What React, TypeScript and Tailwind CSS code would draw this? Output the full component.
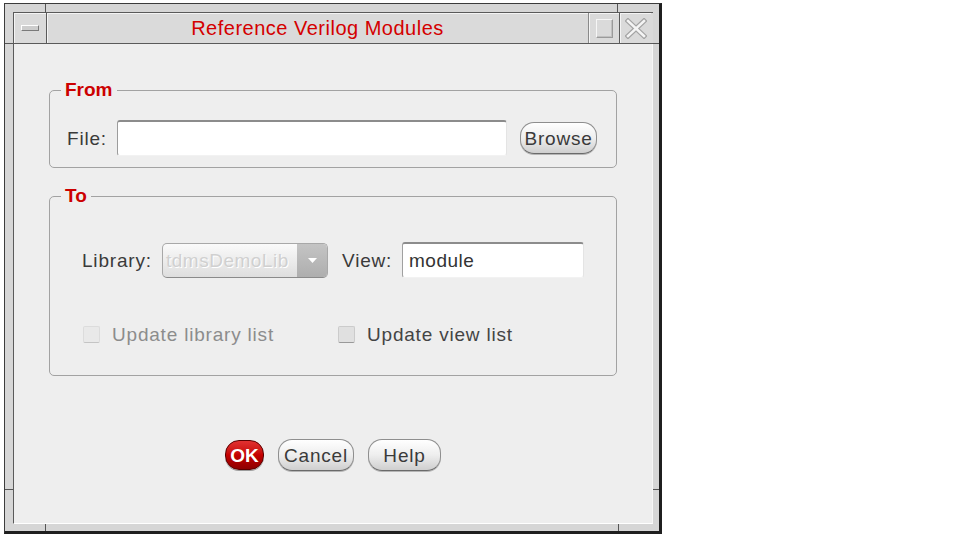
const ui = "font-['Liberation_Sans',Arial,sans-serif]";

function FrameMark({ className }: { className: string }) {
  return <div className={`absolute bg-[#555] ${className}`} />;
}

function PillButton({ label, width }: { label: string; width: string }) {
  return (
    <button
      className={`${width} h-[32px] rounded-[14px] border border-[#8e8e8e] border-b-[#6a6a6a] bg-gradient-to-b from-white via-[#eeeeee] to-[#cfcfcf] text-[19px] tracking-[0.8px] text-[#3a3a3a] leading-none shadow-[0_1px_0_#b5b5b5] flex items-center justify-center`}
    >
      {label}
    </button>
  );
}

function Checkbox({ disabled }: { disabled?: boolean }) {
  return (
    <span
      className={`w-[17px] h-[17px] rounded-[2px] border ${
        disabled
          ? 'bg-[#e9e9e9] border-[#dcdcdc] border-b-[#c4c4c4]'
          : 'bg-[#e0e0e0] border-[#cbcbcb] border-b-[#999]'
      }`}
    />
  );
}

export default function App() {
  return (
    <div className={`w-[958px] h-[538px] bg-white pt-[3px] pl-[4px] ${ui}`}>
      <div className="relative w-[658px] h-[531px] bg-[#d6d6d6] border-t border-l border-[#3c3c3c] border-r-[3px] border-b-[3px] border-r-[#1f1f1f] border-b-[#1f1f1f] pt-[8px] pl-[8px] pr-[6px] pb-[7px] flex flex-col">
        {/* resize handle marks on the frame */}
        <FrameMark className="left-[40px] top-0 w-px h-[9px]" />
        <FrameMark className="left-[612px] top-0 w-px h-[9px]" />
        <FrameMark className="left-0 top-[39px] w-[8px] h-px" />
        <FrameMark className="left-[648px] top-[39px] w-[6px] h-px" />
        <FrameMark className="left-0 top-[485px] w-[8px] h-px" />
        <FrameMark className="left-[648px] top-[485px] w-[6px] h-px" />
        <FrameMark className="left-[40px] top-[520px] w-px h-[7px]" />
        <FrameMark className="left-[613px] top-[520px] w-px h-[7px]" />

        {/* title bar */}
        <div className="h-[32px] flex border-t border-l border-b border-[#5a5a5a] bg-[#dadada]">
          <div className="w-[33px] border-r border-[#5a5a5a] shadow-[inset_1px_1px_0_#f4f4f4] flex items-center justify-center">
            <span className="w-[18px] h-[6px] bg-[#cdcdcd] border border-t-white border-l-white border-[#7a7a7a]" />
          </div>
          <div className="flex-1 shadow-[inset_1px_1px_0_#f4f4f4] flex items-center justify-center text-[20px] tracking-[0.5px] text-[#d40000] leading-none">
            Reference Verilog Modules
          </div>
          <div className="w-[31px] border-l border-[#8a8a8a] shadow-[inset_1px_1px_0_#f4f4f4] flex items-center justify-center">
            <span className="w-[17px] h-[19px] border border-[#9a9a9a] border-t-[#f6f6f6] border-l-[#f6f6f6] shadow-[inset_-1px_-1px_0_#c0c0c0]" />
          </div>
          <div className="w-[32px] border-l border-[#5a5a5a] shadow-[inset_1px_1px_0_#f4f4f4] flex items-center justify-center">
            <svg width="22" height="21" viewBox="0 0 22 21">
              <path d="M3 3 L19 18 M19 3 L3 18" stroke="#a3a3a3" strokeWidth="5" strokeLinecap="square" />
              <path d="M3 3 L19 18 M19 3 L3 18" stroke="#f4f4f4" strokeWidth="2.5" strokeLinecap="square" />
            </svg>
          </div>
          <div className="w-[2px]" />
        </div>

        {/* dialog body */}
        <div className="flex-1 bg-[#eeeeee] border-l border-l-[#5a5a5a] border-r border-r-[#f7f7f7] border-b border-b-white px-[35px] pt-[35px] flex flex-col text-[19px] tracking-[0.8px] text-[#3a3a3a]">
          <fieldset className="border border-[#a2a2a2] rounded-[5px]">
            <legend className="ml-[11px] px-[4px] text-[19px] leading-[22px] font-bold tracking-normal text-[#cc0000]">
              From
            </legend>
            <div className="pt-[19px] pb-[11px] pl-[17px] flex items-center">
              <span className="w-[50px] leading-none">File:</span>
              <div className="w-[390px] h-[36px] bg-white rounded-[3px] border border-[#bdbdbd] border-t-2 border-t-[#8c8c8c] border-l-[#9c9c9c] border-b-[#f2f2f2] border-r-[#e4e4e4]" />
              <div className="ml-[13px]">
                <PillButton label="Browse" width="w-[77px]" />
              </div>
            </div>
          </fieldset>

          <fieldset className="mt-[17px] border border-[#a2a2a2] rounded-[5px]">
            <legend className="ml-[11px] px-[4px] text-[19px] leading-[22px] font-bold tracking-normal text-[#cc0000]">
              To
            </legend>
            <div className="pt-[35px] pb-[30px] pl-[32px]">
              <div className="flex items-center">
                <span className="w-[80px] leading-none">Library:</span>
                <div className="w-[166px] h-[35px] flex rounded-[5px] border border-[#a8a8a8] border-b-[#8a8a8a] overflow-hidden bg-gradient-to-b from-[#fafafa] to-[#dedede]">
                  <span className="flex-1 flex items-center pl-[3px] text-[#d0d0d0] tracking-[0.5px] [text-shadow:1px_1px_0_#ffffff] leading-none">
                    tdmsDemoLib
                  </span>
                  <span className="w-[30px] bg-gradient-to-b from-[#c4c4c4] to-[#aeaeae] flex items-center justify-center">
                    <svg width="9" height="5" viewBox="0 0 9 5">
                      <path d="M0 0 H9 L4.5 5 Z" fill="#ffffff" />
                    </svg>
                  </span>
                </div>
                <span className="ml-[14px] w-[60px] leading-none">View:</span>
                <div className="w-[182px] h-[36px] bg-white rounded-[3px] border border-[#c4c4c4] border-t-2 border-t-[#8c8c8c] border-l-[#a0a0a0] border-b-[#f2f2f2] border-r-[#e4e4e4] flex items-center pl-[6px] text-[#333] tracking-[0.5px] leading-none">
                  module
                </div>
              </div>
              <div className="mt-[45px] h-[22px] flex items-center">
                <div className="w-[256px] pl-[1px] flex items-center gap-[12px]">
                  <Checkbox disabled />
                  <span className="text-[#8c8c8c] leading-none">Update library list</span>
                </div>
                <div className="flex items-center gap-[12px]">
                  <Checkbox />
                  <span className="text-[#444] leading-none">Update view list</span>
                </div>
              </div>
            </div>
          </fieldset>

          <div className="mt-[63px] flex items-center justify-center gap-[14px]">
            <button className="w-[39px] h-[30px] rounded-[14px] border border-[#5a0000] bg-gradient-to-b from-[#e23030] via-[#c40000] to-[#8e0000] text-white font-bold text-[19px] leading-none tracking-normal flex items-center justify-center shadow-[0_1px_0_#9c9c9c]">
              OK
            </button>
            <PillButton label="Cancel" width="w-[76px]" />
            <PillButton label="Help" width="w-[73px]" />
          </div>
        </div>
      </div>
    </div>
  );
}
